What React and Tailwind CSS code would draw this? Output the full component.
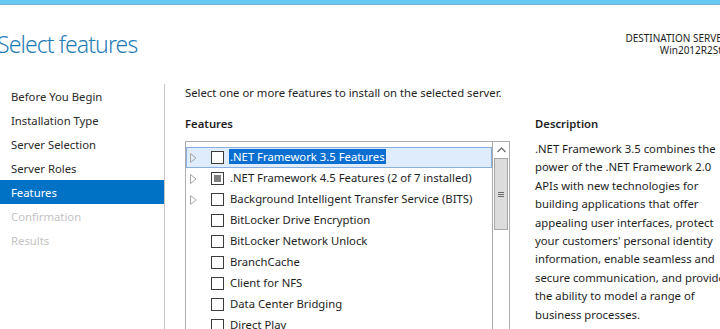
import React from "react";

const font = { fontFamily: '"Noto Sans", "Open Sans", sans-serif' };

const navItems = [
  { label: "Before You Begin", state: "normal" },
  { label: "Installation Type", state: "normal" },
  { label: "Server Selection", state: "normal" },
  { label: "Server Roles", state: "normal" },
  { label: "Features", state: "active" },
  { label: "Confirmation", state: "disabled" },
  { label: "Results", state: "disabled" },
];

const features = [
  { label: ".NET Framework 3.5 Features", arrow: true, check: "none", selected: true },
  { label: ".NET Framework 4.5 Features (2 of 7 installed)", arrow: true, check: "partial" },
  { label: "Background Intelligent Transfer Service (BITS)", arrow: true, check: "none" },
  { label: "BitLocker Drive Encryption", check: "none" },
  { label: "BitLocker Network Unlock", check: "none" },
  { label: "BranchCache", check: "none" },
  { label: "Client for NFS", check: "none" },
  { label: "Data Center Bridging", check: "none" },
  { label: "Direct Play", check: "none" },
];

const descLines = [
  ".NET Framework 3.5 combines the",
  "power of the .NET Framework 2.0",
  "APIs with new technologies for",
  "building applications that offer",
  "appealing user interfaces, protect",
  "your customers' personal identity",
  "information, enable seamless and",
  "secure communication, and provide",
  "the ability to model a range of",
  "business processes.",
];

function Arrow() {
  return (
    <svg width="7" height="10" viewBox="0 0 7 10" className="shrink-0">
      <path d="M0.5 0.5 L6 5 L0.5 9.5 Z" fill="none" stroke="#a6a6a6" strokeWidth="1" />
    </svg>
  );
}

function Checkbox({ state }) {
  return (
    <div className="w-[13px] h-[13px] border border-[#3c3c3c] bg-white flex items-center justify-center shrink-0">
      {state === "partial" && <div className="w-[7px] h-[7px] bg-[#7f7f7f]" />}
    </div>
  );
}

export default function App() {
  return (
    <div className="w-[720px] h-[329px] overflow-hidden bg-white text-[#1e1e1e] flex flex-col" style={font}>
      <div className="h-[4px] bg-[#66c9f1] shrink-0" />
      <div className="h-[1px] bg-[#78a8c8] shrink-0" />
      <div className="h-[79px] shrink-0 flex justify-between">
        <div className="ml-[-3px] pt-[24px] text-[23px] font-light text-[#1f7db6] leading-[30px] tracking-[-0.9px] whitespace-nowrap">
          Select features
        </div>
        <div className="pt-[27px] flex flex-col items-end text-[10px] leading-[12px] text-[#1e1e1e] mr-[-8px]">
          <div className="whitespace-nowrap">DESTINATION SERVER</div>
          <div className="whitespace-nowrap">Win2012R2Std</div>
        </div>
      </div>
      <div className="flex flex-1 min-h-0">
        <div className="w-[164px] shrink-0 flex flex-col text-[11.3px]">
          {navItems.map((it) => (
            <div
              key={it.label}
              className={
                "h-[24px] pl-[11px] pt-[2px] flex items-center whitespace-nowrap " +
                (it.state === "active"
                  ? "bg-[#0072c6] text-white"
                  : it.state === "disabled"
                  ? "text-[#c3c3c3]"
                  : "text-[#2a2a2a]")
              }
            >
              {it.label}
            </div>
          ))}
        </div>
        <div className="w-[1px] bg-[#c6c6c6] shrink-0" />
        <div className="flex-1 pl-[20px] flex flex-col text-[11.3px] min-w-0">
          <div className="pt-[0px] h-[17px] leading-[17px] whitespace-nowrap">
            Select one or more features to install on the selected server.
          </div>
          <div className="flex mt-[14px] gap-[25px]">
            <div className="w-[325px] shrink-0 flex flex-col">
              <div className="h-[17px] leading-[17px] font-semibold">Features</div>
              <div className="mt-[9px] h-[200px] border border-[#abadb3] flex">
                <div className="flex-1 pt-[5px] flex flex-col min-w-0">
                  {features.map((f) => (
                    <div
                      key={f.label}
                      className={
                        "h-[21px] shrink-0 flex items-center border " +
                        (f.selected ? "bg-[#dfecfc] border-[#86aee0]" : "border-transparent")
                      }
                    >
                      <div className="w-[24px] pl-[3px] flex items-center shrink-0">
                        {f.arrow ? <Arrow /> : null}
                      </div>
                      <Checkbox state={f.check} />
                      <div className="ml-[5px] whitespace-nowrap">
                        {f.selected ? (
                          <span className="bg-[#0a6fd1] text-white px-[1px]">{f.label}</span>
                        ) : (
                          <span className="px-[1px]">{f.label}</span>
                        )}
                      </div>
                    </div>
                  ))}
                </div>
                <div className="w-[17px] shrink-0 border-l border-[#a9a9a9] flex flex-col">
                  <div className="h-[16px] flex items-center justify-center">
                    <svg width="9" height="6" viewBox="0 0 9 6">
                      <path d="M0.5 5 L4.5 1 L8.5 5" fill="none" stroke="#606060" strokeWidth="1.1" />
                    </svg>
                  </div>
                  <div className="h-[72px] mx-[1px] bg-[#dcdcdc] border border-[#a6a6a6] flex items-center justify-center">
                    <div className="flex flex-col gap-[1px]">
                      <div className="w-[6px] h-[1px] bg-[#6c6c6c]" />
                      <div className="w-[6px] h-[1px] bg-[#6c6c6c]" />
                      <div className="w-[6px] h-[1px] bg-[#6c6c6c]" />
                    </div>
                  </div>
                </div>
              </div>
            </div>
            <div className="w-[200px] shrink-0 flex flex-col">
              <div className="h-[17px] leading-[17px] font-semibold">Description</div>
              <div className="mt-[8px] flex flex-col leading-[18.4px]">
                {descLines.map((l) => (
                  <div key={l} className="whitespace-nowrap">{l}</div>
                ))}
              </div>
            </div>
          </div>
        </div>
      </div>
    </div>
  );
}
